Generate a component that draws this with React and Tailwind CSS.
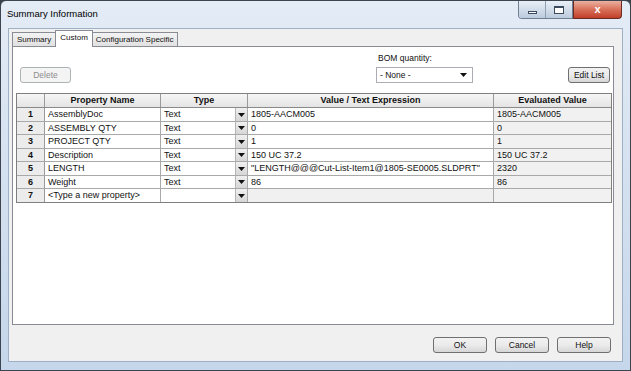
import React from "react";

const rows = [
  { n: "1", name: "AssemblyDoc", type: "Text", val: "1805-AACM005", ev: "1805-AACM005", h: "h-[14px]" },
  { n: "2", name: "ASSEMBLY QTY", type: "Text", val: "0", ev: "0", h: "h-[13px]" },
  { n: "3", name: "PROJECT QTY", type: "Text", val: "1", ev: "1", h: "h-[14px]" },
  { n: "4", name: "Description", type: "Text", val: "150 UC 37.2", ev: "150 UC 37.2", h: "h-[13px]" },
  { n: "5", name: "LENGTH", type: "Text", val: "\"LENGTH@@@Cut-List-Item1@1805-SE0005.SLDPRT\"", ev: "2320", h: "h-[14px]" },
  { n: "6", name: "Weight", type: "Text", val: "86", ev: "86", h: "h-[13px]" },
  { n: "7", name: "<Type a new property>", type: "", val: "", ev: "", h: "h-[13px]" },
];

function Arrow() {
  return (
    <svg width="7" height="4" viewBox="0 0 7 4" className="block">
      <path d="M0 0 L7 0 L3.5 4 Z" fill="#111" />
    </svg>
  );
}

function Btn({ children, className = "", disabled = false }) {
  return (
    <div
      className={
        "flex items-center justify-center h-[16px] rounded-[3px] border bg-gradient-to-b " +
        (disabled
          ? "border-[#adb2b5] from-[#f4f4f4] to-[#f4f4f4] text-[#8d8d8d] "
          : "border-[#707070] from-[#f2f2f2] via-[#ebebeb] to-[#d6d6d6] text-[#111] ") +
        className
      }
    >
      {children}
    </div>
  );
}

export default function App() {
  return (
    <div
      className="w-[631px] h-[371px] overflow-hidden bg-[#3a4048] text-[9px] leading-none"
      style={{ fontFamily: '"Liberation Sans", Arial, sans-serif' }}
    >
      <div className="w-[631px] h-[371px] flex flex-col border border-[#3c4450] rounded-t-[6px] bg-gradient-to-b from-[#e4ecf6] via-[#d3e0ef] to-[#c6d7eb]">
        {/* title bar */}
        <div className="h-[27px] flex items-start">
          <div className="pl-[6px] pt-[8px] text-[9.5px] text-black">Summary Information</div>
          <div className="ml-auto mr-[8px] flex items-start">
            <div className="flex h-[18px] border border-t-0 border-[#6f7f94] rounded-bl-[4px] overflow-hidden">
              <div className="w-[27px] h-full bg-gradient-to-b from-[#e9eff7] via-[#d2ddea] to-[#bccbdc] flex items-center justify-center border-r border-[#8fa0b5]">
                <div className="w-[9px] h-[3px] mt-[5px] border border-[#3b4a5c] bg-white"></div>
              </div>
              <div className="w-[26px] h-full bg-gradient-to-b from-[#e9eff7] via-[#d2ddea] to-[#bccbdc] flex items-center justify-center">
                <div className="w-[10px] h-[8px] border border-[#3b4a5c] border-t-[2px] bg-white"></div>
              </div>
            </div>
            <div className="w-[49px] h-[18px] border border-t-0 border-[#6b2a22] rounded-br-[4px] bg-gradient-to-b from-[#eab0a1] via-[#d8705a] to-[#c13e29] flex items-center justify-center text-white font-bold text-[11px]">
              x
            </div>
          </div>
        </div>
        {/* body */}
        <div className="flex-1 mx-[7px] mb-[8px] border border-[#9eb0c6] bg-[#f0f0f0] flex flex-col pl-[3px] pr-[8px]">
          {/* tabs */}
          <div className="h-[17px] flex items-end pt-[1px] text-[8px]">
            <div className="h-[14px] px-[4px] flex items-center border border-b-0 border-[#898c95] bg-gradient-to-b from-[#f3f3f3] to-[#e1e1e1] text-[#111]">
              Summary
            </div>
            <div className="relative z-10 h-[17px] -mb-px -ml-px px-[4px] pb-[3px] flex items-center border border-b-0 border-[#898c95] bg-white text-[#111]">
              Custom
            </div>
            <div className="h-[14px] -ml-px px-[3px] flex items-center border border-b-0 border-[#898c95] bg-gradient-to-b from-[#f3f3f3] to-[#e1e1e1] text-[#111]">
              Configuration Specific
            </div>
          </div>
          {/* panel */}
          <div className="h-[279px] border border-[#898c95] bg-white flex flex-col">
            <div className="h-[46px] flex items-start pl-[7px] pr-[3px]">
              <Btn disabled className="w-[51px] mt-[20px] text-[8.5px]">Delete</Btn>
              <div className="flex-1"></div>
              <div className="w-[97px] mr-[95px] flex flex-col">
                <div className="mt-[7px] h-[9px] pl-[2px] text-[#111] text-[8.5px]">BOM quantity:</div>
                <div className="mt-[4px] h-[16px] border border-[#abadb3] bg-white flex items-center pl-[3px] pr-[5px] text-[#111] text-[8.5px]">
                  <span>- None -</span>
                  <span className="ml-auto"><Arrow /></span>
                </div>
              </div>
              <Btn className="w-[42px] mt-[20px] text-[8.5px]">Edit List</Btn>
            </div>
            {/* grid */}
            <div className="ml-[3px] w-[596px] border border-[#7f7f7f] text-[#111]">
              <div className="grid grid-cols-[28px_116px_87px_246px_1fr] h-[14px] bg-gradient-to-b from-[#f6f6f6] to-[#e4e4e4] border-b border-[#8a8a8a] font-bold">
                <div className="border-r border-[#9a9a9a]"></div>
                <div className="border-r border-[#9a9a9a] flex items-center justify-center">Property Name</div>
                <div className="border-r border-[#9a9a9a] flex items-center justify-center">Type</div>
                <div className="border-r border-[#9a9a9a] flex items-center justify-center">Value / Text Expression</div>
                <div className="flex items-center justify-center">Evaluated Value</div>
              </div>
              {rows.map((r, i) => (
                <div
                  key={r.n}
                  className={"grid grid-cols-[28px_116px_87px_246px_1fr] " + r.h + (i < rows.length - 1 ? " border-b border-[#a9a9a9]" : "")}
                >
                  <div className="bg-[#ececec] border-r border-[#9a9a9a] flex items-center justify-center font-bold">{r.n}</div>
                  <div className="border-r border-[#a9a9a9] flex items-center pl-[3px]">{r.name}</div>
                  <div className="border-r border-[#a9a9a9] flex items-center pl-[3px]">
                    <span>{r.type}</span>
                    <div className="ml-auto h-full w-[12px] bg-gradient-to-b from-[#f0f0f0] to-[#d6d6d6] border-l border-[#b5b5b5] flex items-center justify-center">
                      <Arrow />
                    </div>
                  </div>
                  <div className={"border-r border-[#a9a9a9] flex items-center pl-[3px] " + (r.n === "7" ? "bg-[#f0f0f0]" : "")}>{r.val}</div>
                  <div className="bg-[#f1f1f1] flex items-center pl-[3px]">{r.ev}</div>
                </div>
              ))}
            </div>
          </div>
          {/* bottom buttons */}
          <div className="flex-1 flex items-start justify-end gap-[8px] pt-[12px] pr-[3px] text-[8.5px]">
            <Btn className="w-[54px]">OK</Btn>
            <Btn className="w-[54px]">Cancel</Btn>
            <Btn className="w-[54px]">Help</Btn>
          </div>
        </div>
      </div>
    </div>
  );
}
